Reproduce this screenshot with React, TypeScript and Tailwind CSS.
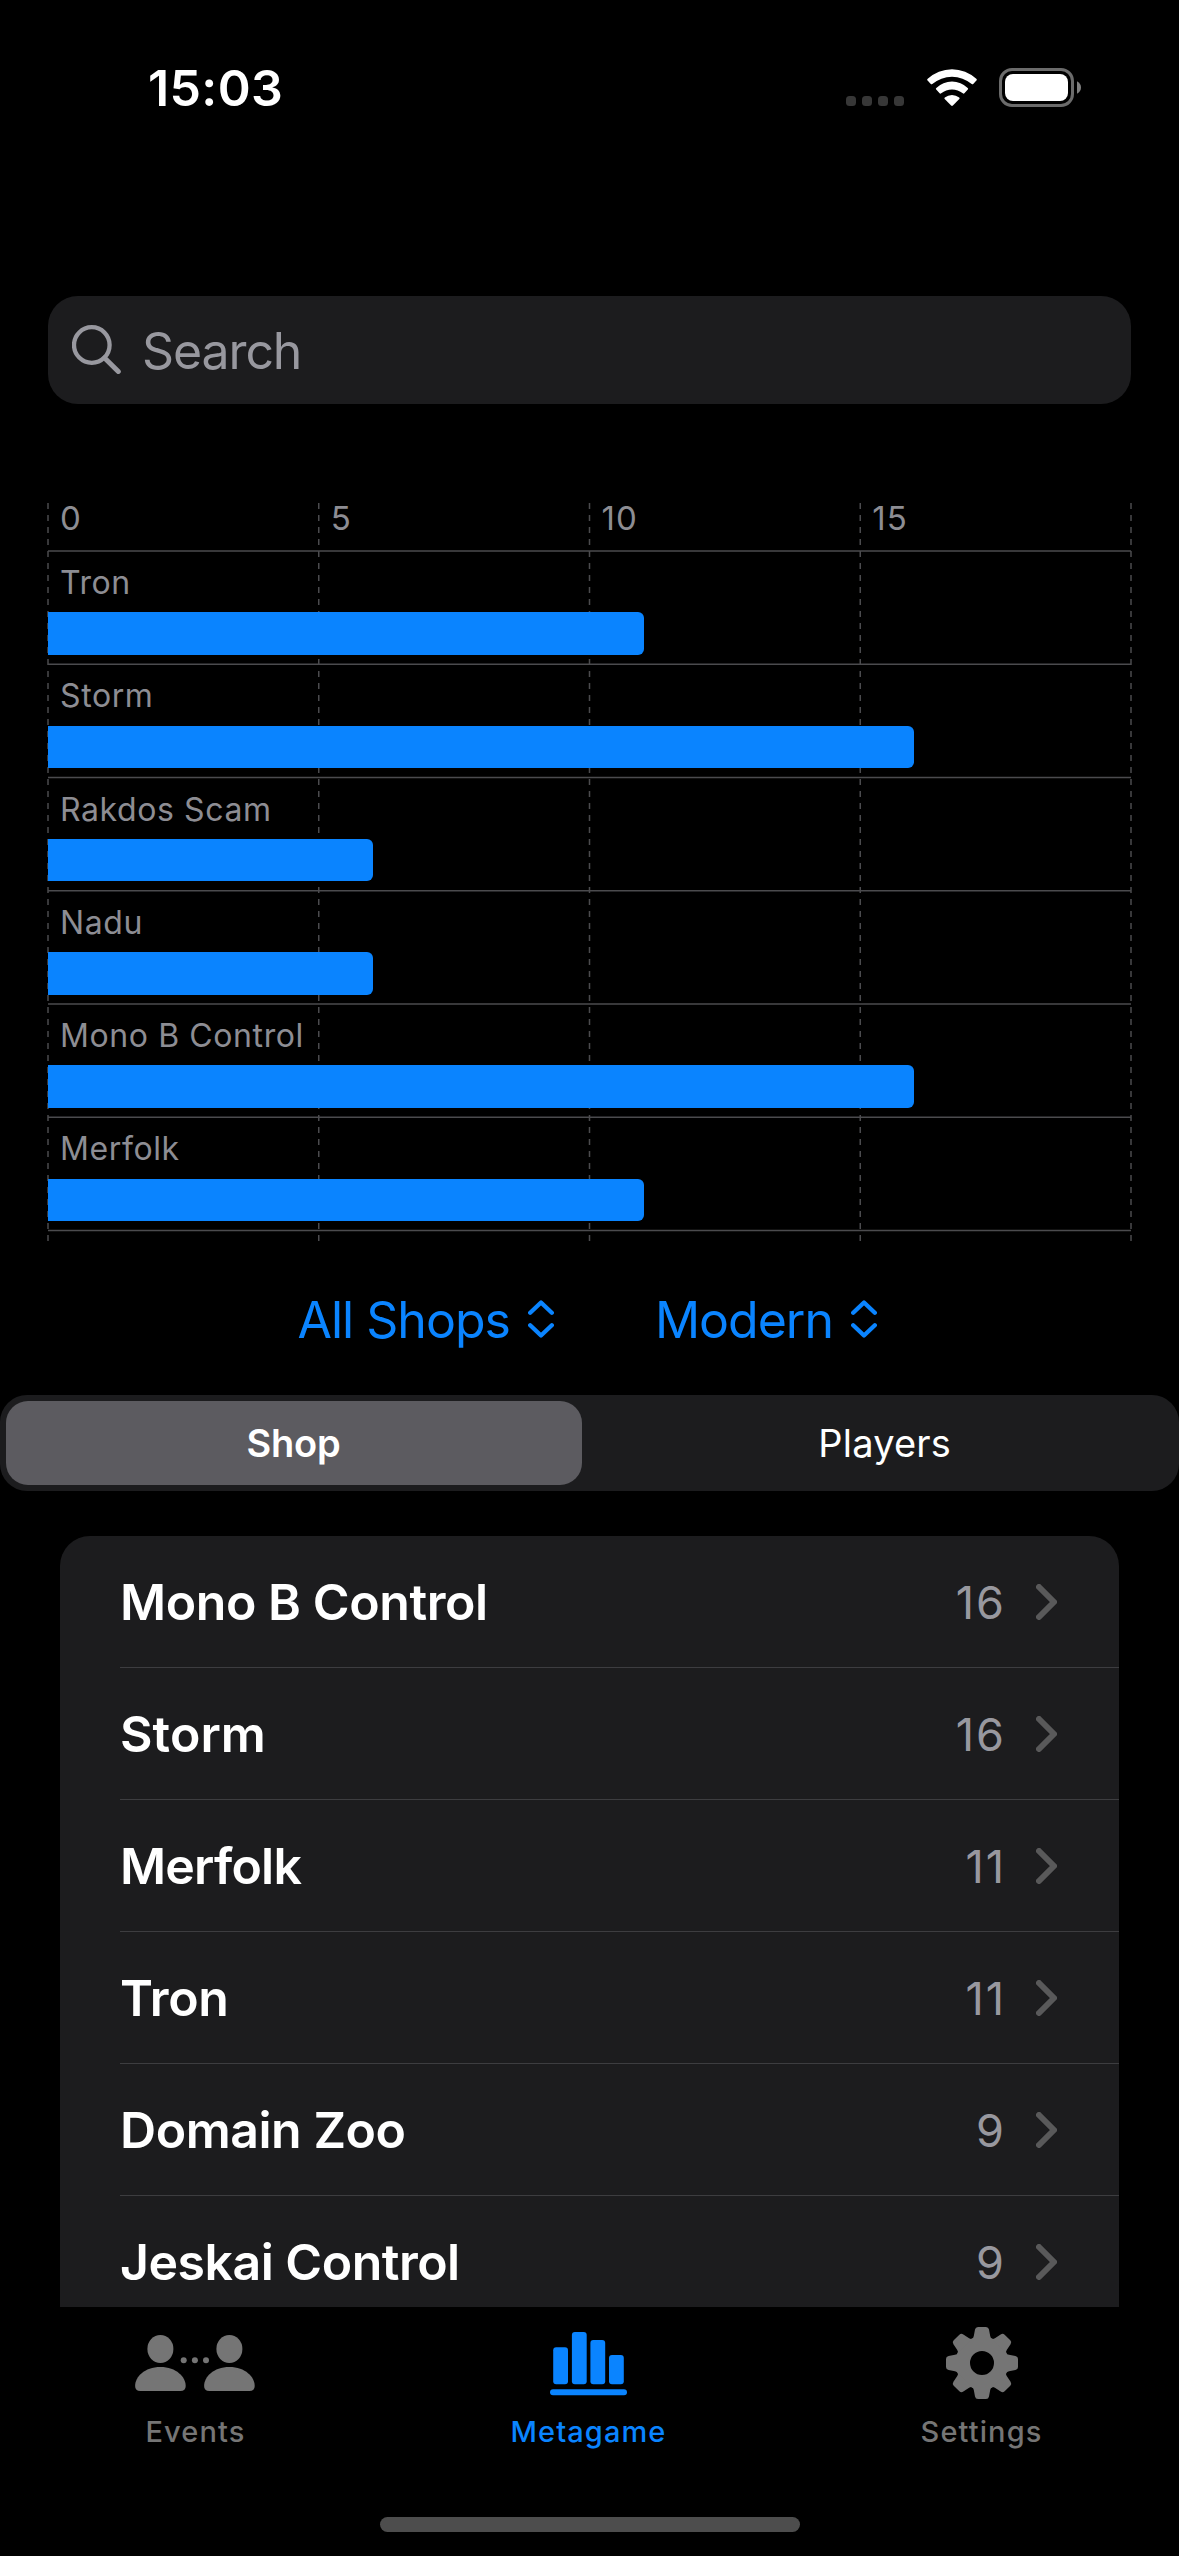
import type { ReactNode } from "react";

const AXIS_MAX = 20;
const AXIS_STEP = 5;
const PLOT_WIDTH = 1083;
const PLOT_HEIGHT = 738;
const ROW_HEIGHT = 113.25;
const HEADER_HEIGHT = 48;

const bars = [
  { name: "Tron", value: 11 },
  { name: "Storm", value: 16 },
  { name: "Rakdos Scam", value: 6 },
  { name: "Nadu", value: 6 },
  { name: "Mono B Control", value: 16 },
  { name: "Merfolk", value: 11 },
];

const decks = [
  { name: "Mono B Control", count: 16, tracking: "tracking-[-0.42px]" },
  { name: "Storm", count: 16, tracking: "tracking-[0.1px]" },
  { name: "Merfolk", count: 11, tracking: "tracking-[-0.8px]" },
  { name: "Tron", count: 11, tracking: "tracking-[-0.4px]" },
  { name: "Domain Zoo", count: 9, tracking: "tracking-[-0.45px]" },
  { name: "Jeskai Control", count: 9, tracking: "tracking-[-0.5px]" },
];

function StatusBar() {
  return (
    <header className="flex h-[175px] shrink-0 items-center justify-between pl-[148px] pr-[98px]">
      <span className="pt-px text-[50px] font-semibold tracking-[0.37px]">15:03</span>
      <div className="flex items-end gap-[22.5px]">
        <div className="mb-px flex gap-[6px]">
          {[0, 1, 2, 3].map((dot) => (
            <span key={dot} className="size-[10px] rounded-[3.5px] bg-[#373737]" />
          ))}
        </div>
        <svg className="mb-px h-[37px] w-[50px]" viewBox="0 0 50 37" fill="#fff">
          <path d="M.6 11.4Q-.3 10.6.7 9.8A35.4 35.4 0 0 1 49.3 9.8Q50.3 10.6 49.4 11.4L46.2 15Q45.5 15.7 44.7 15A30.5 30.5 0 0 0 5.3 15Q4.5 15.7 3.8 15Z" />
          <path d="M9.2 20.5Q8.4 19.7 9.3 18.9A22.5 22.5 0 0 1 40.7 18.9Q41.6 19.7 40.8 20.5L37.4 24.3Q36.6 25 35.8 24.3A17.2 17.2 0 0 0 14.2 24.3Q13.4 25 12.6 24.3Z" />
          <path d="M17.7 30Q17 29.2 17.8 28.5A11.3 11.3 0 0 1 32.2 28.5Q33 29.2 32.3 30L25.9 36.5Q25 37.3 24.1 36.5Z" />
        </svg>
        <svg className="h-[39px] w-[82px]" viewBox="0 0 82 39">
          <rect x="1.5" y="1.5" width="72" height="36" rx="11.5" fill="none" stroke="#6b6b6b" strokeWidth="3" />
          <rect x="6" y="6" width="63" height="27" rx="8" fill="#fff" />
          <path d="M78 13.2Q82 15.4 82 19.5T78 25.8Z" fill="#808080" />
        </svg>
      </div>
    </header>
  );
}

function SearchField() {
  return (
    <div className="mx-[48px] mt-[121px] flex h-[108px] shrink-0 items-center rounded-[30px] bg-[#1c1c1e] pl-[24px] text-[#98989f]">
      <svg className="-mt-px size-[49px]" viewBox="0 0 49 49" fill="none" stroke="currentColor">
        <circle cx="19.8" cy="20" r="17.8" strokeWidth="4.3" />
        <path d="M32.6 33 46.3 46.6" strokeWidth="5" strokeLinecap="round" />
      </svg>
      <span className="ml-[21px] pt-[2px] text-[50px] tracking-[-1.1px]">Search</span>
    </div>
  );
}

function GridLines() {
  const columns = Array.from({ length: AXIS_MAX / AXIS_STEP + 1 }, (_, i) => (i * PLOT_WIDTH * AXIS_STEP) / AXIS_MAX);
  const rows = Array.from({ length: bars.length + 1 }, (_, i) => HEADER_HEIGHT + i * ROW_HEIGHT);
  return (
    <svg
      className="absolute inset-0 h-full w-full overflow-visible"
      viewBox="0 0 1083 738"
      stroke="#4b4b4e"
      strokeWidth="1.5"
    >
      {rows.map((y) => (
        <path key={y} d={`M0 ${y}H${PLOT_WIDTH}`} />
      ))}
      {columns.map((x) => (
        <path key={x} d={`M${x} 0V${PLOT_HEIGHT}`} strokeDasharray="6 6" />
      ))}
    </svg>
  );
}

function Chart() {
  return (
    <section className="relative mx-[48px] mt-[99px] h-[738px] shrink-0 text-[32px] text-[#8d8d93]">
      <GridLines />
      <div className="relative grid h-[48px] grid-cols-4">
        {[0, 5, 10, 15].map((tick) => (
          <span key={tick} className="pl-[12px] text-[33px] leading-[31px] tracking-[1.2px]">
            {tick}
          </span>
        ))}
      </div>
      {bars.map((bar) => (
        <div key={bar.name} className="relative h-[113.25px]">
          <div className="h-[61.3px] pl-[12px] leading-[64px] tracking-[0.6px]">{bar.name}</div>
          <div
            className="h-[42.6px] rounded-r-[6px] bg-[#0a84ff]"
            style={{ width: `${(bar.value / AXIS_MAX) * 100}%` }}
          />
        </div>
      ))}
    </section>
  );
}

function Picker({ label }: { label: string }) {
  return (
    <button className="flex items-center gap-[18px] tracking-[-1px]">
      <span className="pt-[2px]">{label}</span>
      <svg
        className="h-[38px] w-[26px]"
        viewBox="0 0 26 38"
        fill="none"
        stroke="currentColor"
        strokeWidth="4.3"
        strokeLinecap="round"
        strokeLinejoin="round"
      >
        <path d="M2.2 12.8 13 2.5 23.8 12.8M2.2 25.2 13 35.5 23.8 25.2" />
      </svg>
    </button>
  );
}

function Segments() {
  return (
    <div className="grid h-[96px] shrink-0 grid-cols-2 rounded-[27px] bg-[#1c1c1e] text-[38px]">
      <div className="my-[6px] ml-[6px] mr-[7.5px] flex items-center justify-center rounded-[22px] bg-[#5c5b60] pr-px font-semibold tracking-[-0.2px]">
        Shop
      </div>
      <div className="flex items-center justify-center pl-px tracking-[0.2px]">Players</div>
    </div>
  );
}

function DeckList() {
  return (
    <ul className="mx-[60px] mt-[45px] h-[771px] shrink-0 overflow-hidden rounded-t-[30px] bg-[#1c1c1e]">
      {decks.map((deck) => (
        <li key={deck.name} className="ml-[60px] flex h-[132px] items-center border-b border-[#3d3d40] pr-[62px]">
          <span className={`flex-1 pt-px text-[50px] font-semibold ${deck.tracking}`}>{deck.name}</span>
          <span className="mr-[30px] pt-px text-[45px] tracking-[2px] text-[#98989f]">{deck.count}</span>
          <svg
            className="h-[36px] w-[21px]"
            viewBox="0 0 21 36"
            fill="none"
            stroke="#59595a"
            strokeWidth="6"
            strokeLinecap="round"
            strokeLinejoin="round"
          >
            <path d="M3 3 18 18 3 33" />
          </svg>
        </li>
      ))}
    </ul>
  );
}

function PeopleIcon() {
  return (
    <svg className="-ml-[3px] h-[56px] w-[120px]" viewBox="0 0 120 56" fill="currentColor">
      {[25.4, 94.4].map((x) => (
        <g key={x} transform={`translate(${x} 0)`}>
          <ellipse cx="0" cy="14" rx="13" ry="14" />
          <path d="M-20 56Q-25.3 56-25.3 51C-25.3 42-16 32 0 32S25.3 42 25.3 51Q25.3 56 20 56Z" />
        </g>
      ))}
      {[48.7, 59.9, 71].map((x) => (
        <circle key={x} cx={x} cy="25.3" r="3" />
      ))}
    </svg>
  );
}

function BarsIcon() {
  return (
    <svg className="-ml-[2px] mt-px h-[64px] w-[77px]" viewBox="0 0 77 64" fill="currentColor">
      <rect x="3.2" y="15.3" width="14.8" height="37" rx="3" />
      <rect x="21.9" y="0" width="14.8" height="52.3" rx="3" />
      <rect x="40.4" y="8" width="14.8" height="44.3" rx="3" />
      <rect x="59" y="23" width="14.8" height="29.3" rx="3" />
      <rect x="0" y="57.2" width="77" height="6" rx="3" />
    </svg>
  );
}

function GearIcon() {
  return (
    <svg className="-ml-px size-[72px]" viewBox="-36 -36 72 72" fill="currentColor">
      <circle r="19.2" fill="none" stroke="currentColor" strokeWidth="14.4" />
      {[0, 45, 90, 135, 180, 225, 270, 315].map((angle) => (
        <path
          key={angle}
          transform={`rotate(${angle})`}
          d="M-10-24Q-8.6-25-8.2-27L-7-33.4Q-6.5-36-4-36H4Q6.5-36 7-33.4L8.2-27Q8.6-25 10-24Z"
        />
      ))}
    </svg>
  );
}

function Tab({ icon, label, active = false }: { icon: ReactNode; label: string; active?: boolean }) {
  return (
    <button className={`flex flex-col items-center ${active ? "text-[#0a84ff]" : "text-[#757575]"}`}>
      <span className="flex h-[112px] items-center justify-center">{icon}</span>
      <span className="-ml-[2px] text-[29px] font-medium leading-[26px] tracking-[1.1px]">{label}</span>
    </button>
  );
}

export default function App() {
  return (
    <div className="flex h-[2556px] w-[1179px] flex-col overflow-hidden bg-black font-['Inter',sans-serif] leading-none text-white">
      <StatusBar />
      <SearchField />
      <Chart />
      <div className="flex h-[154px] shrink-0 items-center gap-[101px] pl-[297.5px] pt-[2px] text-[50px] text-[#0a84ff]">
        <Picker label="All Shops" />
        <Picker label="Modern" />
      </div>
      <Segments />
      <DeckList />
      <nav className="grid h-[210px] shrink-0 grid-cols-3 content-start">
        <Tab icon={<PeopleIcon />} label="Events" />
        <Tab icon={<BarsIcon />} label="Metagame" active />
        <Tab icon={<GearIcon />} label="Settings" />
      </nav>
      <div className="mx-auto h-[15px] w-[420px] shrink-0 rounded-full bg-[#4d4d4d]" />
    </div>
  );
}
